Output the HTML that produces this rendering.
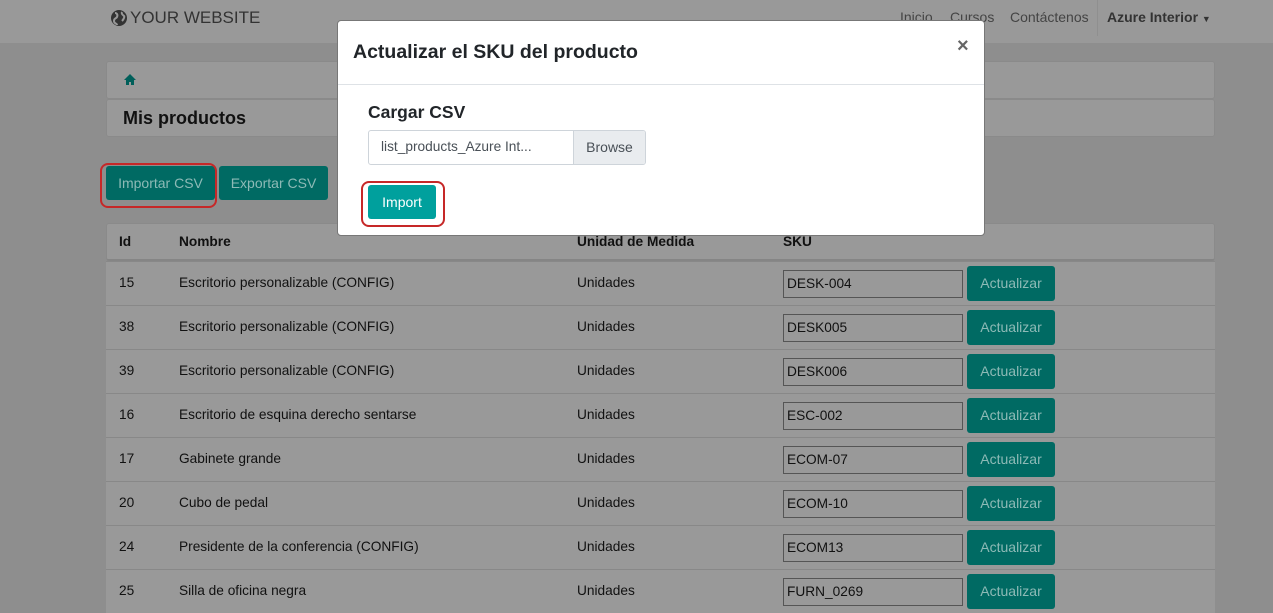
<!DOCTYPE html>
<html><head><meta charset="utf-8"><style>
*{box-sizing:border-box;margin:0;padding:0}
body{width:1273px;height:599px;overflow:hidden;background:#8e8e8e;font-family:"Liberation Sans",Arial,sans-serif;color:#111;position:relative;font-size:14px}
.nav{position:absolute;left:0;top:0;width:1273px;height:43px;background:#999}
.logo{position:absolute;left:110px;top:8px;font-size:17px;color:#333;display:flex;align-items:center;gap:2px}
.menu{position:absolute;top:9px;font-size:14px;color:#444}
.card{position:absolute;left:106px;width:1109px;background:#999;border:1px solid #8a8a8a;border-radius:3px}
.btn{position:absolute;background:#006a63;color:#8dbab6;font-size:14px;border-radius:3px;display:flex;align-items:center;justify-content:center}
.row{position:absolute;left:106px;width:1109px;height:44px;border-top:1px solid #888;background:#999}
.row span{position:absolute;top:13px;font-size:13.7px}
.inp{position:absolute;left:677px;top:8px;width:180px;height:28px;border:1px solid #555;background:#999;padding:5px 3px;font-size:13.7px}
.act{position:absolute;left:861px;top:4px;width:88px;height:35px;background:#006a63;color:#8dbab6;border-radius:3px;text-align:center;line-height:34px}
.modal{position:absolute;left:337px;top:20px;width:648px;height:216px;background:#fff;border-radius:4px;border:1px solid #777}
</style></head><body>
<div class="nav">
<div class="logo"><svg width="18" height="18" viewBox="0 0 18 18"><circle cx="9" cy="9" r="8" fill="#333"/><path d="M5 4c2 0 3 2 2 4s-3 1-3 4 3 2 3 4M12 3c-1 2 1 3 2 4s-1 4-2 5" stroke="#999" stroke-width="2" fill="none"/></svg>YOUR WEBSITE</div>
<div class="menu" style="left:900px">Inicio</div>
<div class="menu" style="left:950px">Cursos</div>
<div class="menu" style="left:1010px">Contáctenos</div>
<div style="position:absolute;left:1097px;top:0;width:1px;height:36px;background:#8f8f8f"></div>
<div class="menu" style="left:1107px;font-weight:bold;color:#333">Azure Interior <span style="font-size:9px">▼</span></div>
</div>
<div class="card" style="top:61px;height:38px"><svg style="position:absolute;left:17px;top:12px" width="12" height="11" viewBox="0 0 12 11"><path d="M6 0L0 6h2v5h3V8h2v3h3V6h2z" fill="#005f5a"/></svg></div>
<div class="card" style="top:99px;height:38px"><div style="position:absolute;left:16px;top:8px;font-size:18px;font-weight:bold">Mis productos</div></div>
<div class="btn" style="left:106px;top:166px;width:109px;height:34px">Importar CSV</div>
<div style="position:absolute;left:100px;top:163px;width:117px;height:45px;border:2px solid #c62828;border-radius:8px"></div>
<div class="btn" style="left:219px;top:166px;width:109px;height:34px">Exportar CSV</div>
<div class="card" style="top:223px;height:38px;border-bottom:2px solid #858585;font-weight:bold;font-size:13.7px">
<span style="position:absolute;left:12px;top:10px">Id</span><span style="position:absolute;left:72px;top:10px">Nombre</span><span style="position:absolute;left:470px;top:10px">Unidad de Medida</span><span style="position:absolute;left:676px;top:10px">SKU</span></div>
<div class="row" style="top:261px"><span style="left:13px">15</span><span style="left:73px">Escritorio personalizable (CONFIG)</span><span style="left:471px">Unidades</span><div class="inp">DESK-004</div><div class="act">Actualizar</div></div>
<div class="row" style="top:305px"><span style="left:13px">38</span><span style="left:73px">Escritorio personalizable (CONFIG)</span><span style="left:471px">Unidades</span><div class="inp">DESK005</div><div class="act">Actualizar</div></div>
<div class="row" style="top:349px"><span style="left:13px">39</span><span style="left:73px">Escritorio personalizable (CONFIG)</span><span style="left:471px">Unidades</span><div class="inp">DESK006</div><div class="act">Actualizar</div></div>
<div class="row" style="top:393px"><span style="left:13px">16</span><span style="left:73px">Escritorio de esquina derecho sentarse</span><span style="left:471px">Unidades</span><div class="inp">ESC-002</div><div class="act">Actualizar</div></div>
<div class="row" style="top:437px"><span style="left:13px">17</span><span style="left:73px">Gabinete grande</span><span style="left:471px">Unidades</span><div class="inp">ECOM-07</div><div class="act">Actualizar</div></div>
<div class="row" style="top:481px"><span style="left:13px">20</span><span style="left:73px">Cubo de pedal</span><span style="left:471px">Unidades</span><div class="inp">ECOM-10</div><div class="act">Actualizar</div></div>
<div class="row" style="top:525px"><span style="left:13px">24</span><span style="left:73px">Presidente de la conferencia (CONFIG)</span><span style="left:471px">Unidades</span><div class="inp">ECOM13</div><div class="act">Actualizar</div></div>
<div class="row" style="top:569px"><span style="left:13px">25</span><span style="left:73px">Silla de oficina negra</span><span style="left:471px">Unidades</span><div class="inp">FURN_0269</div><div class="act">Actualizar</div></div>
<div class="modal">
<div style="position:absolute;left:15px;top:20px;font-size:19.5px;font-weight:bold;color:#212529">Actualizar el SKU del producto</div>
<div style="position:absolute;left:619px;top:14px;font-size:20px;font-weight:bold;color:#666">×</div>
<div style="position:absolute;left:0;top:63px;width:646px;height:1px;background:#dee2e6"></div>
<div style="position:absolute;left:30px;top:81px;font-size:17.5px;font-weight:bold;color:#212529">Cargar CSV</div>
<div style="position:absolute;left:30px;top:109px;width:278px;height:35px;border:1px solid #ced4da;border-radius:3px;overflow:hidden">
<div style="position:absolute;left:12px;top:8px;color:#495057;font-size:13.7px">list_products_Azure Int...</div>
<div style="position:absolute;right:0;top:0;width:72px;height:33px;background:#e9ecef;border-left:1px solid #ced4da;color:#495057;text-align:center;line-height:33px">Browse</div></div>
<div style="position:absolute;left:30px;top:164px;width:68px;height:34px;background:#00a09d;color:#fff;border-radius:3px;text-align:center;line-height:34px">Import</div>
<div style="position:absolute;left:23px;top:160px;width:84px;height:46px;border:2px solid #c62828;border-radius:8px"></div>
</div>
</body></html>
